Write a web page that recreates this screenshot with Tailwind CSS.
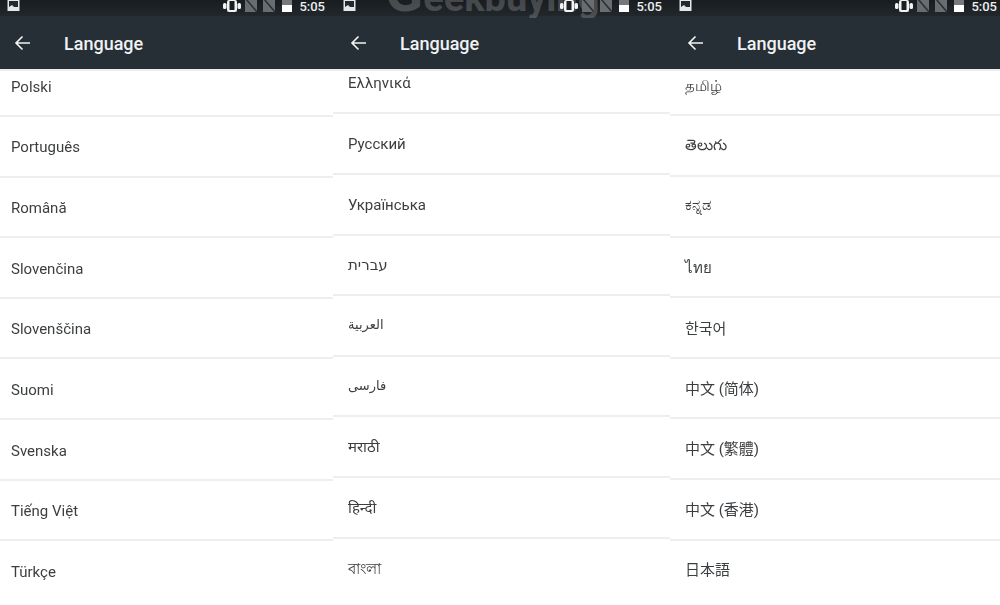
<!DOCTYPE html>
<html lang="en">

<head>
  <meta charset="UTF-8">
  <meta name="viewport" content="width=device-width, initial-scale=1.0">
  <title>Language</title>
  <script src="https://cdn.jsdelivr.net/npm/@tailwindcss/browser@4"></script>
</head>

<body class="bg-white font-['Roboto','Noto_Sans','DejaVu_Sans','Noto_Sans_CJK_SC',sans-serif]">
  <div class="relative flex w-[1000px] h-[605px] overflow-hidden">

    <!-- left phone -->
    <section class="w-[333px] shrink-0">
      <div class="h-[16px] bg-gradient-to-b from-[#191d20] to-[#21272c] flex items-start pl-[7px] pr-[8px] text-white">
        <svg class="w-[13px] h-[11px]" viewBox="0 0 13 11"><rect x="0.5" y="0" width="12" height="11" fill="#e4e6e7"/><rect x="2" y="1" width="9" height="6" fill="#23292e"/><path d="M2 7l3-2 2 2z" fill="#e4e6e7"/></svg>
        <div class="ml-auto flex items-start">
          <svg class="w-[18px] h-[13px]" viewBox="0 0 18 13"><rect x="4" y="0" width="10" height="12" rx="2" fill="#f2f3f3"/><rect x="6.5" y="1" width="5" height="9" fill="#1b2024"/><rect x="0" y="3" width="3.5" height="6" rx="1.5" fill="#f2f3f3"/><rect x="14.5" y="3" width="3.5" height="6" rx="1.5" fill="#f2f3f3"/></svg>
          <svg class="w-[12px] h-[12px] ml-[4px]" viewBox="0 0 12 12"><path d="M0 12V0h12v12z" fill="#696d6f"/><path d="M1 -1l11 13" stroke="#2a2f33" stroke-width="1.5"/></svg>
          <svg class="w-[12px] h-[12px] ml-[6px]" viewBox="0 0 12 12"><path d="M0 12V0h12v12z" fill="#696d6f"/><path d="M1 -1l11 13" stroke="#2a2f33" stroke-width="1.5"/></svg>
          <svg class="w-[10px] h-[12px] ml-[7px]" viewBox="0 0 10 12"><rect width="10" height="12" fill="#75797b"/><rect y="5" width="10" height="7" fill="#fff"/></svg>
          <span class="text-[13px] leading-[13px] font-medium text-[#eceeee] ml-[7px]">5:05</span>
        </div>
      </div>
      <header class="h-[53px] bg-[#262e36] flex items-center pl-[14px] text-white">
        <svg class="w-[18px] h-[18px]" viewBox="0 0 18 18" fill="none" stroke="#f4f5f5" stroke-width="1.6"><path d="M16 9H2M8.5 2.5L2 9l6.5 6.5"/></svg>
        <h1 class="ml-[32px] text-[18px] font-medium text-[#f1f2f3] mt-[1px]">Language</h1>
      </header>
      <ul class="text-[15px] text-[#3c3f41] blur-[0.3px]">
        <li class="h-[48px] pl-[11px] pt-[5px] border-b-2 border-t-2 border-[#eeeeee]">Polski</li>
        <li class="h-[60.6px] pl-[11px] pt-[2px] flex items-center border-b-2 border-[#eeeeee]">Português</li>
        <li class="h-[60.6px] pl-[11px] pt-[2px] flex items-center border-b-2 border-[#eeeeee]">Română</li>
        <li class="h-[60.6px] pl-[11px] pt-[3px] flex items-center border-b-2 border-[#eeeeee]">Slovenčina</li>
        <li class="h-[60.6px] pl-[11px] pt-[2px] flex items-center border-b-2 border-[#eeeeee]">Slovenščina</li>
        <li class="h-[60.6px] pl-[11px] pt-[3px] flex items-center border-b-2 border-[#eeeeee]">Suomi</li>
        <li class="h-[60.6px] pl-[11px] pt-[3px] flex items-center border-b-2 border-[#eeeeee]">Svenska</li>
        <li class="h-[60.6px] pl-[11px] pt-[2px] flex items-center border-b-2 border-[#eeeeee]">Tiếng Việt</li>
        <li class="h-[60.6px] pl-[11px] pt-[2px] flex items-center">Türkçe</li>
      </ul>
    </section>

    <!-- middle phone -->
    <section class="w-[337px] shrink-0">
      <div class="h-[16px] bg-gradient-to-b from-[#191d20] to-[#21272c] flex items-start pl-[10px] pr-[8px] text-white">
        <svg class="w-[13px] h-[11px]" viewBox="0 0 13 11"><rect x="0.5" y="0" width="12" height="11" fill="#e4e6e7"/><rect x="2" y="1" width="9" height="6" fill="#23292e"/><path d="M2 7l3-2 2 2z" fill="#e4e6e7"/></svg>
        <div class="ml-auto flex items-start relative z-10">
          <svg class="w-[18px] h-[13px]" viewBox="0 0 18 13"><rect x="4" y="0" width="10" height="12" rx="2" fill="#f2f3f3"/><rect x="6.5" y="1" width="5" height="9" fill="#1b2024"/><rect x="0" y="3" width="3.5" height="6" rx="1.5" fill="#f2f3f3"/><rect x="14.5" y="3" width="3.5" height="6" rx="1.5" fill="#f2f3f3"/></svg>
          <svg class="w-[12px] h-[12px] ml-[4px]" viewBox="0 0 12 12"><path d="M0 12V0h12v12z" fill="#696d6f"/><path d="M1 -1l11 13" stroke="#2a2f33" stroke-width="1.5"/></svg>
          <svg class="w-[12px] h-[12px] ml-[6px]" viewBox="0 0 12 12"><path d="M0 12V0h12v12z" fill="#696d6f"/><path d="M1 -1l11 13" stroke="#2a2f33" stroke-width="1.5"/></svg>
          <svg class="w-[10px] h-[12px] ml-[7px]" viewBox="0 0 10 12"><rect width="10" height="12" fill="#75797b"/><rect y="5" width="10" height="7" fill="#fff"/></svg>
          <span class="text-[13px] leading-[13px] font-medium text-[#eceeee] ml-[7px]">5:05</span>
        </div>
      </div>
      <header class="h-[53px] bg-[#262e36] flex items-center pl-[17px] text-white">
        <svg class="w-[18px] h-[18px]" viewBox="0 0 18 18" fill="none" stroke="#f4f5f5" stroke-width="1.6"><path d="M16 9H2M8.5 2.5L2 9l6.5 6.5"/></svg>
        <h1 class="ml-[32px] text-[18px] font-medium text-[#f1f2f3] mt-[1px]">Language</h1>
      </header>
      <ul class="text-[15px] text-[#3c3f41] blur-[0.3px]">
        <li class="h-[45.4px] pl-[15px] pt-[1px] border-b-2 border-t-2 border-[#eeeeee]">Ελληνικά</li>
        <li class="h-[60.6px] pl-[15px] pt-[2px] flex items-center border-b-2 border-[#eeeeee]">Русский</li>
        <li class="h-[60.6px] pl-[15px] pt-[2px] flex items-center border-b-2 border-[#eeeeee]">Українська</li>
        <li class="h-[60.6px] pl-[15px] flex items-center border-b-2 border-[#eeeeee]">עברית</li>
        <li class="h-[60.6px] pl-[15px] pb-[2px] flex items-center border-b-2 border-[#eeeeee] text-[13px]">العربية</li>
        <li class="h-[60.6px] pl-[15px] pb-[1px] flex items-center border-b-2 border-[#eeeeee] text-[13px]">فارسی</li>
        <li class="h-[60.6px] pl-[15px] pt-[2px] flex items-center border-b-2 border-[#eeeeee]">मराठी</li>
        <li class="h-[60.6px] pl-[15px] pt-[2px] flex items-center border-b-2 border-[#eeeeee]">हिन्दी</li>
        <li class="h-[60.6px] pl-[15px] flex items-center">বাংলা</li>
      </ul>
    </section>

    <!-- right phone -->
    <section class="flex-1">
      <div class="h-[16px] bg-gradient-to-b from-[#191d20] to-[#21272c] flex items-start pl-[9px] pr-[3px] text-white">
        <svg class="w-[13px] h-[11px]" viewBox="0 0 13 11"><rect x="0.5" y="0" width="12" height="11" fill="#e4e6e7"/><rect x="2" y="1" width="9" height="6" fill="#23292e"/><path d="M2 7l3-2 2 2z" fill="#e4e6e7"/></svg>
        <div class="ml-auto flex items-start">
          <svg class="w-[18px] h-[13px]" viewBox="0 0 18 13"><rect x="4" y="0" width="10" height="12" rx="2" fill="#f2f3f3"/><rect x="6.5" y="1" width="5" height="9" fill="#1b2024"/><rect x="0" y="3" width="3.5" height="6" rx="1.5" fill="#f2f3f3"/><rect x="14.5" y="3" width="3.5" height="6" rx="1.5" fill="#f2f3f3"/></svg>
          <svg class="w-[12px] h-[12px] ml-[4px]" viewBox="0 0 12 12"><path d="M0 12V0h12v12z" fill="#696d6f"/><path d="M1 -1l11 13" stroke="#2a2f33" stroke-width="1.5"/></svg>
          <svg class="w-[12px] h-[12px] ml-[6px]" viewBox="0 0 12 12"><path d="M0 12V0h12v12z" fill="#696d6f"/><path d="M1 -1l11 13" stroke="#2a2f33" stroke-width="1.5"/></svg>
          <svg class="w-[10px] h-[12px] ml-[7px]" viewBox="0 0 10 12"><rect width="10" height="12" fill="#75797b"/><rect y="5" width="10" height="7" fill="#fff"/></svg>
          <span class="text-[13px] leading-[13px] font-medium text-[#eceeee] ml-[7px]">5:05</span>
        </div>
      </div>
      <header class="h-[53px] bg-[#262e36] flex items-center pl-[17px] text-white">
        <svg class="w-[18px] h-[18px]" viewBox="0 0 18 18" fill="none" stroke="#f4f5f5" stroke-width="1.6"><path d="M16 9H2M8.5 2.5L2 9l6.5 6.5"/></svg>
        <h1 class="ml-[32px] text-[18px] font-medium text-[#f1f2f3] mt-[1px]">Language</h1>
      </header>
      <ul class="text-[15px] text-[#3c3f41] blur-[0.3px]">
        <li class="h-[47.4px] pl-[15px] pt-[4px] border-b-2 border-t-2 border-[#eeeeee]">தமிழ்</li>
        <li class="h-[60.6px] pl-[15px] flex items-center border-b-2 border-[#eeeeee]">తెలుగు</li>
        <li class="h-[60.6px] pl-[15px] pb-[2px] flex items-center border-b-2 border-[#eeeeee]">ಕನ್ನಡ</li>
        <li class="h-[60.6px] pl-[15px] pt-[2px] flex items-center border-b-2 border-[#eeeeee]">ไทย</li>
        <li class="h-[60.6px] pl-[15px] pt-[2px] flex items-center border-b-2 border-[#eeeeee] font-['Noto_Sans_CJK_KR',sans-serif]">한국어</li>
        <li class="h-[60.6px] pl-[15px] pt-[2px] flex items-center border-b-2 border-[#eeeeee] font-['Roboto','Noto_Sans_CJK_SC',sans-serif]">中文 (简体)</li>
        <li class="h-[60.6px] pl-[15px] pt-[2px] flex items-center border-b-2 border-[#eeeeee] font-['Roboto','Noto_Sans_CJK_TC',sans-serif]">中文 (繁體)</li>
        <li class="h-[60.6px] pl-[15px] pt-[2px] flex items-center border-b-2 border-[#eeeeee] font-['Roboto','Noto_Sans_CJK_TC',sans-serif]">中文 (香港)</li>
        <li class="h-[60.6px] pl-[15px] pb-[3px] flex items-center font-['Noto_Sans_CJK_JP',sans-serif]">日本語</li>
      </ul>
    </section>

    <!-- watermark over the middle status bar -->
    <div class="absolute left-[385px] top-0 w-[240px] h-[18px] overflow-hidden">
      <div class="absolute left-0 bottom-[-2px] text-[38px] leading-none font-bold text-white/20 whitespace-nowrap"><span class="text-[56px]">G</span>eekbuying</div>
    </div>
  </div>
</body>

</html>
